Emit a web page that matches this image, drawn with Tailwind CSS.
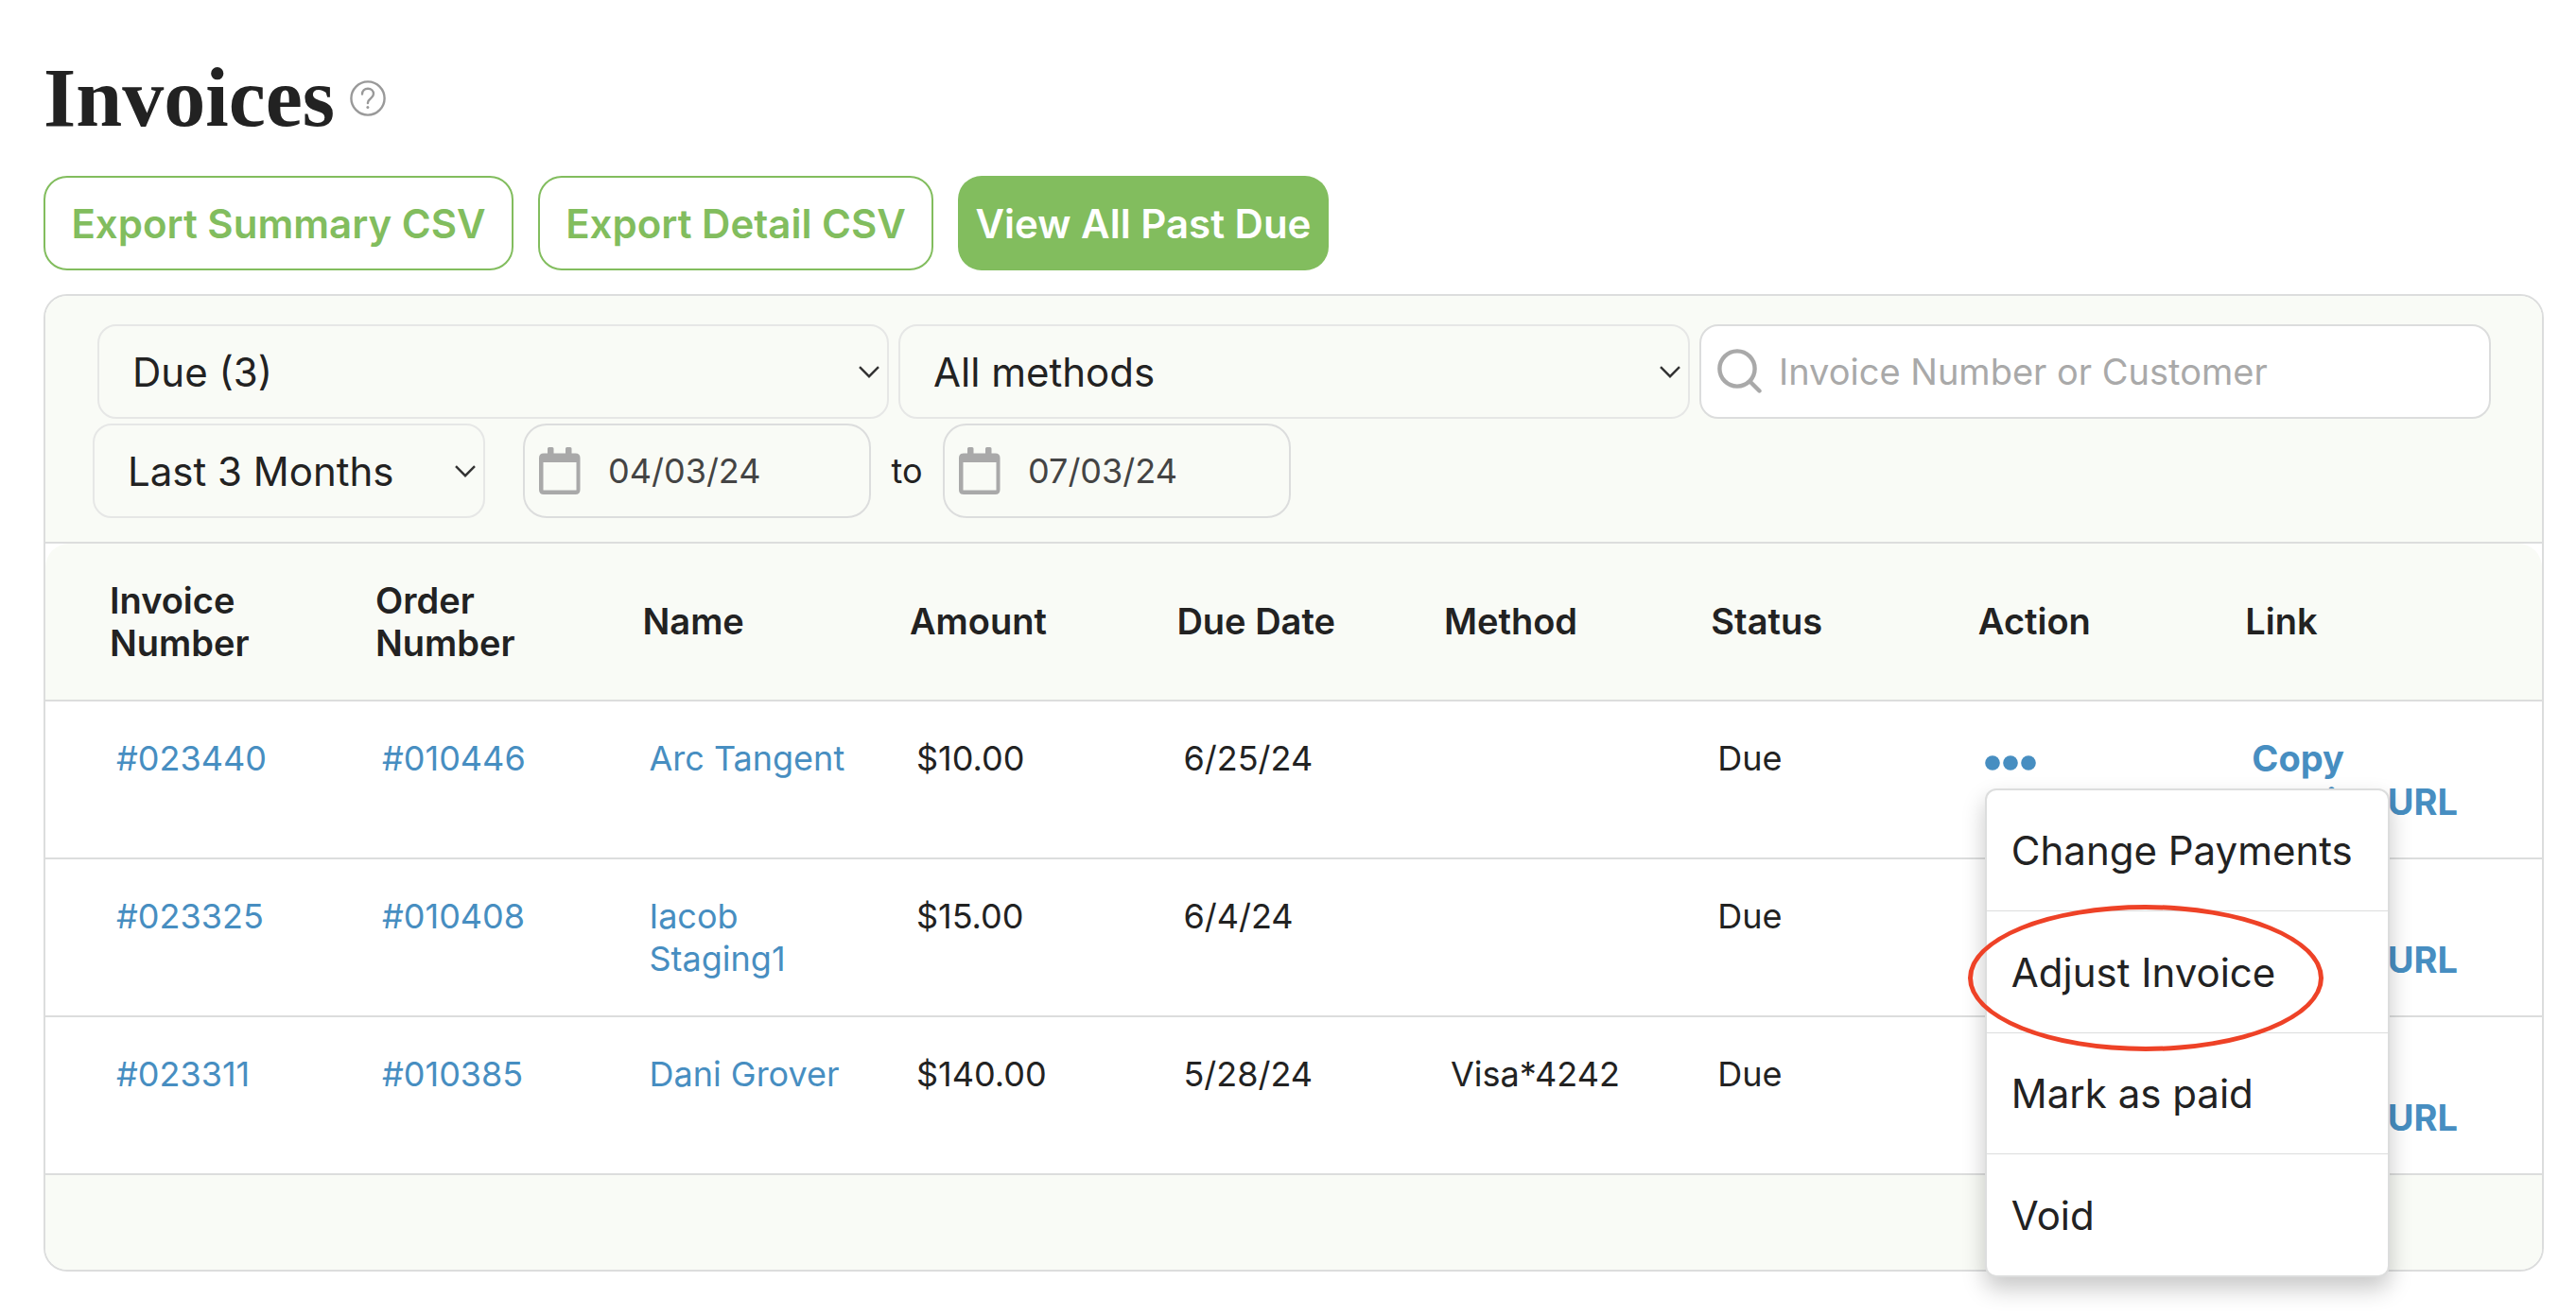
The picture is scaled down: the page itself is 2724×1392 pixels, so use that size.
<!DOCTYPE html>
<html lang="en">
    <head>
        <meta charset="UTF-8">
        <meta name="viewport" content="width=device-width, initial-scale=1.0">
        <title>Invoices</title>
        <script src="https://cdn.jsdelivr.net/npm/@tailwindcss/browser@4"></script>
    </head>
    <body
        class="bg-white min-h-screen pt-[60px] pl-[46px] pr-[34px] pb-12 font-['Inter','Liberation_Sans',sans-serif] text-[#222]">

        <header class="flex items-center gap-4 h-[88px]">
            <h1
                class="font-['Liberation_Serif',serif] text-[88px] leading-[88px] font-bold">Invoices</h1>
            <button aria-label="Help">
                <svg class="w-[38px] h-[38px]" viewBox="0 0 38 38" fill="none"
                    stroke="#999" stroke-width="2.4" stroke-linecap="round">
                    <circle cx="19" cy="19" r="17.6" />
                    <path
                        d="M13 14.6c0-3.4 2.5-5.9 6-5.9s6 2.4 6 5.5c0 2.6-1.7 3.9-3.4 5.3-1.7 1.3-2.7 2.3-2.7 4.6" />
                    <circle cx="18.9" cy="28.6" r="1.5" fill="#999"
                        stroke="none" />
                </svg>
            </button>
        </header>

        <div class="flex gap-[26px] mt-[38px] text-[42px] font-semibold">
            <button
                class="h-[100px] w-[497px] rounded-[25px] border-2 border-[#82bd5e] text-[#82bd5e] whitespace-nowrap">Export
                Summary CSV</button>
            <button
                class="h-[100px] w-[418px] rounded-[25px] border-2 border-[#82bd5e] text-[#82bd5e] whitespace-nowrap">Export
                Detail CSV</button>
            <button
                class="h-[100px] w-[392px] rounded-[25px] bg-[#82bd5e] text-white whitespace-nowrap">View
                All Past Due</button>
        </div>

        <main class="mt-[25px] border-2 border-[#dcdddd] rounded-[25px]">
            <!-- Filters -->
            <form
                class="bg-[#f9fbf6] rounded-t-[23px] border-b-2 border-[#dcdddd] pt-[30px] pb-[25px] pl-[50px] pr-[54px]">
                <div class="grid grid-cols-3 gap-[10px] pl-[5px]">
                    <div class="relative">
                        <select aria-label="Invoice status"
                            class="appearance-none w-full h-[100px] pl-[35px] pr-12 rounded-[20px] border-2 border-[#e6e7e6] text-[42px]">
                            <option>Due (3)</option>
                        </select>
                        <svg
                            class="absolute right-[10px] top-[44px] w-[22px] h-[13px] pointer-events-none"
                            viewBox="0 0 22 13" fill="none" stroke="#333"
                            stroke-width="2.4">
                            <path d="M1 1.2l10 10 10-10" />
                        </svg>
                    </div>
                    <div class="relative">
                        <select aria-label="Payment method"
                            class="appearance-none w-full h-[100px] pl-[35px] pr-12 rounded-[20px] border-2 border-[#e6e7e6] text-[42px]">
                            <option>All methods</option>
                        </select>
                        <svg
                            class="absolute right-[10px] top-[44px] w-[22px] h-[13px] pointer-events-none"
                            viewBox="0 0 22 13" fill="none" stroke="#333"
                            stroke-width="2.4">
                            <path d="M1 1.2l10 10 10-10" />
                        </svg>
                    </div>
                    <div class="relative">
                        <svg
                            class="absolute left-[18px] top-[25px] w-[48px] h-[48px] pointer-events-none"
                            viewBox="0 0 48 48" fill="none" stroke="#a9a9a9"
                            stroke-width="4.4" stroke-linecap="round">
                            <circle cx="22" cy="22" r="18.6" />
                            <path d="M35.5 35.5l10 10" />
                        </svg>
                        <input type="text" aria-label="Search invoices"
                            placeholder="Invoice Number or Customer"
                            class="w-full h-[100px] pl-[82px] pr-5 bg-white rounded-[20px] border-2 border-[#dcdddd] text-[38px] placeholder:text-[#a9a9a9]">
                    </div>
                </div>
                <div class="flex items-center mt-[5px]">
                    <div class="relative w-[415px] mr-10">
                        <select aria-label="Date range"
                            class="appearance-none w-full h-[100px] pl-[35px] pr-12 rounded-[20px] border-2 border-[#e6e7e6] text-[42px]">
                            <option>Last 3 Months</option>
                        </select>
                        <svg
                            class="absolute right-[10px] top-[44px] w-[22px] h-[13px] pointer-events-none"
                            viewBox="0 0 22 13" fill="none" stroke="#333"
                            stroke-width="2.4">
                            <path d="M1 1.2l10 10 10-10" />
                        </svg>
                    </div>
                    <div class="relative w-[368px]">
                        <svg
                            class="absolute left-[17px] top-[25px] w-[44px] h-[50px] pointer-events-none"
                            viewBox="0 0 44 50" fill="#a9a9a9">
                            <path fill-rule="evenodd"
                                d="M9 1.5q0-1.5 1.5-1.5h3.5q1.5 0 1.5 1.5V6.5h12.500V1.5q0-1.5 1.5-1.5h3.5q1.5 0 1.5 1.5V6.5h4q5 0 5 5v33.500q0 5-5 5H5q-5 0-5-5V11.500q0-5 5-5h4zM4.500 16v29.500h35V16z" />
                        </svg>
                        <input type="text" aria-label="From date"
                            value="04/03/24"
                            class="w-full h-[100px] pl-[88px] rounded-[25px] border-2 border-[#dcdddd] text-[36px] text-[#444]">
                    </div>
                    <span
                        class="w-[76px] text-center text-[36px]">to</span>
                    <div class="relative w-[368px]">
                        <svg
                            class="absolute left-[17px] top-[25px] w-[44px] h-[50px] pointer-events-none"
                            viewBox="0 0 44 50" fill="#a9a9a9">
                            <path fill-rule="evenodd"
                                d="M9 1.5q0-1.5 1.5-1.5h3.5q1.5 0 1.5 1.5V6.5h12.500V1.5q0-1.5 1.5-1.5h3.5q1.5 0 1.5 1.5V6.5h4q5 0 5 5v33.500q0 5-5 5H5q-5 0-5-5V11.500q0-5 5-5h4zM4.500 16v29.500h35V16z" />
                        </svg>
                        <input type="text" aria-label="To date"
                            value="07/03/24"
                            class="w-full h-[100px] pl-[88px] rounded-[25px] border-2 border-[#dcdddd] text-[36px] text-[#444]">
                    </div>
                </div>
            </form>

            <!-- Invoice list -->
            <table
                class="w-full table-fixed border-separate border-spacing-0 text-left leading-[45px]">
                <colgroup>
                    <col class="w-[12.5%]">
                    <col class="w-[10.7%]">
                    <col class="w-[10.7%]">
                    <col class="w-[10.7%]">
                    <col class="w-[10.7%]">
                    <col class="w-[10.7%]">
                    <col class="w-[10.7%]">
                    <col class="w-[10.7%]">
                    <col>
                </colgroup>
                <thead class="text-[38px]">
                    <tr
                        class="h-[167px] *:bg-[#f9fbf6] *:border-b-2 *:border-[#dcdddd] *:pl-[19px] *:font-semibold">
                        <th class="first:pl-[68px] rounded-tl-[25px]">Invoice<br>Number</th>
                        <th>Order<br>Number</th>
                        <th>Name</th>
                        <th>Amount</th>
                        <th>Due Date</th>
                        <th>Method</th>
                        <th>Status</th>
                        <th>Action</th>
                        <th class="rounded-tr-[25px]">Link</th>
                    </tr>
                </thead>
                <tbody class="text-[36px]">
                    <tr
                        class="h-[167px] *:align-top *:pt-[38px] *:pl-[26px] *:border-b-2 *:border-[#dcdddd]">
                        <td class="first:pl-[75px]"><a href="#"
                                class="text-[#478ec1]">#023440</a></td>
                        <td><a href="#" class="text-[#478ec1]">#010446</a></td>
                        <td><a href="#" class="text-[#478ec1]">Arc
                                Tangent</a></td>
                        <td>$10.00</td>
                        <td>6/25/24</td>
                        <td></td>
                        <td>Due</td>
                        <td>
                            <div class="relative">
                                <button aria-label="Actions"
                                    class="flex items-center h-[54px]">
                                    <svg class="w-[54px] h-[16px]"
                                        viewBox="0 0 54 16" fill="#478ec1">
                                        <circle cx="8" cy="8" r="7.8" />
                                        <circle cx="27" cy="8" r="7.8" />
                                        <circle cx="46" cy="8" r="7.8" />
                                    </svg>
                                </button>
                                <!-- Open action menu -->
                                <div
                                    class="absolute left-0 top-[54px] w-[428px] z-10 bg-white border-2 border-[#dcdddd] rounded-[12px] shadow-[0_12px_24px_rgba(0,0,0,0.22)] text-[42px] divide-y divide-[#dcdddd]">
                                    <button
                                        class="block w-full h-[128px] pl-[26px] text-left whitespace-nowrap">Change
                                        Payments</button>
                                    <div class="relative">
                                        <button
                                            class="block w-full h-[128px] pl-[26px] text-left whitespace-nowrap">Adjust
                                            Invoice</button>
                                        <div
                                            class="absolute -left-[20px] -top-[7px] w-[376px] h-[155px] border-[5px] border-[#ee4227] rounded-[50%] pointer-events-none"></div>
                                    </div>
                                    <button
                                        class="block w-full h-[128px] pl-[26px] text-left whitespace-nowrap">Mark
                                        as paid</button>
                                    <button
                                        class="block w-full h-[128px] pl-[26px] text-left whitespace-nowrap">Void</button>
                                </div>
                            </div>
                        </td>
                        <td><a href="#"
                                class="text-[#478ec1] text-[38px] font-bold whitespace-nowrap">Copy<br>Invoice
                                URL</a></td>
                    </tr>
                    <tr
                        class="h-[167px] *:align-top *:pt-[38px] *:pl-[26px] *:border-b-2 *:border-[#dcdddd]">
                        <td class="first:pl-[75px]"><a href="#"
                                class="text-[#478ec1]">#023325</a></td>
                        <td><a href="#" class="text-[#478ec1]">#010408</a></td>
                        <td><a href="#"
                                class="text-[#478ec1]">Iacob<br>Staging1</a></td>
                        <td>$15.00</td>
                        <td>6/4/24</td>
                        <td></td>
                        <td>Due</td>
                        <td></td>
                        <td><a href="#"
                                class="text-[#478ec1] text-[38px] font-bold whitespace-nowrap">Copy<br>Invoice
                                URL</a></td>
                    </tr>
                    <tr
                        class="h-[167px] *:align-top *:pt-[38px] *:pl-[26px] *:border-b-2 *:border-[#dcdddd]">
                        <td class="first:pl-[75px]"><a href="#"
                                class="text-[#478ec1]">#023311</a></td>
                        <td><a href="#" class="text-[#478ec1]">#010385</a></td>
                        <td><a href="#" class="text-[#478ec1]">Dani
                                Grover</a></td>
                        <td>$140.00</td>
                        <td>5/28/24</td>
                        <td>Visa*4242</td>
                        <td>Due</td>
                        <td></td>
                        <td><a href="#"
                                class="text-[#478ec1] text-[38px] font-bold whitespace-nowrap">Copy<br>Invoice
                                URL</a></td>
                    </tr>
                </tbody>
            </table>
            <div class="h-[100px] bg-[#f9fbf6] rounded-b-[23px]"></div>
        </main>
    </body>
</html>
